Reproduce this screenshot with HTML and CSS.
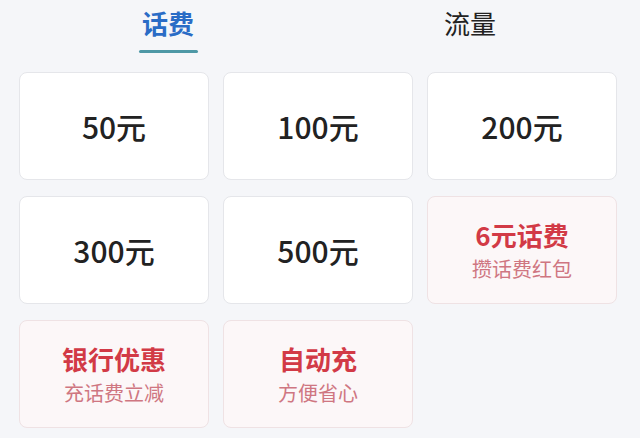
FILE: index.html
```html
<!DOCTYPE html>
<html lang="zh-CN">
<head>
<meta charset="utf-8">
<link rel="stylesheet" href="styles.css">
</head>
<body>
<div class="page">
  <div class="tabs">
    <div class="tab active"><span class="tab-label">话费</span><span class="tab-bar"></span></div>
    <div class="tab"><span class="tab-label">流量</span></div>
  </div>
  <div class="grid">
    <div class="card"><span class="amount">50元</span></div>
    <div class="card"><span class="amount">100元</span></div>
    <div class="card"><span class="amount">200元</span></div>
    <div class="card"><span class="amount">300元</span></div>
    <div class="card"><span class="amount">500元</span></div>
    <div class="card promo"><span class="promo-title">6元话费</span><span class="promo-sub">攒话费红包</span></div>
    <div class="card promo"><span class="promo-title">银行优惠</span><span class="promo-sub">充话费立减</span></div>
    <div class="card promo"><span class="promo-title">自动充</span><span class="promo-sub">方便省心</span></div>
  </div>
</div>
</body>
</html>
```
FILE: styles.css
```css
html, body {
  margin: 0;
  padding: 0;
}
body {
  width: 640px;
  height: 438px;
  overflow: hidden;
  background: #f5f6f9;
  font-family: "Noto Sans CJK SC", "Noto Sans", sans-serif;
}
.page {
  display: flex;
  flex-direction: column;
}
.tabs {
  display: flex;
  padding-left: 17px;
  height: 72px;
}
.tab {
  width: 302px;
  display: flex;
  flex-direction: column;
  align-items: center;
}
.tab-label {
  font-size: 26px;
  line-height: 26px;
  margin-top: 10px;
  color: #222;
}
.tab.active .tab-label {
  color: #2a6cc6;
  font-weight: 700;
}
.tab-bar {
  margin-top: 14px;
  width: 59px;
  height: 3px;
  border-radius: 2px;
  background: #4e98a6;
}
.grid {
  display: grid;
  grid-template-columns: 190px 190px 190px;
  grid-auto-rows: 108px;
  column-gap: 14px;
  row-gap: 16px;
  padding-left: 19px;
}
.card {
  box-sizing: border-box;
  background: #ffffff;
  border: 1px solid #e5e6ea;
  border-radius: 8px;
  display: flex;
  flex-direction: column;
  align-items: center;
  justify-content: center;
}
.amount {
  font-size: 30px;
  font-weight: 500;
  color: #222;
  line-height: 32px;
}
.card.promo {
  background: #fcf7f8;
  border-color: #efe2e4;
}
.promo-title {
  font-size: 26px;
  font-weight: 700;
  color: #d23a46;
  line-height: 32px;
}
.promo-sub {
  font-size: 20px;
  color: #cf7681;
  line-height: 24px;
  margin-top: 6px;
}
```
